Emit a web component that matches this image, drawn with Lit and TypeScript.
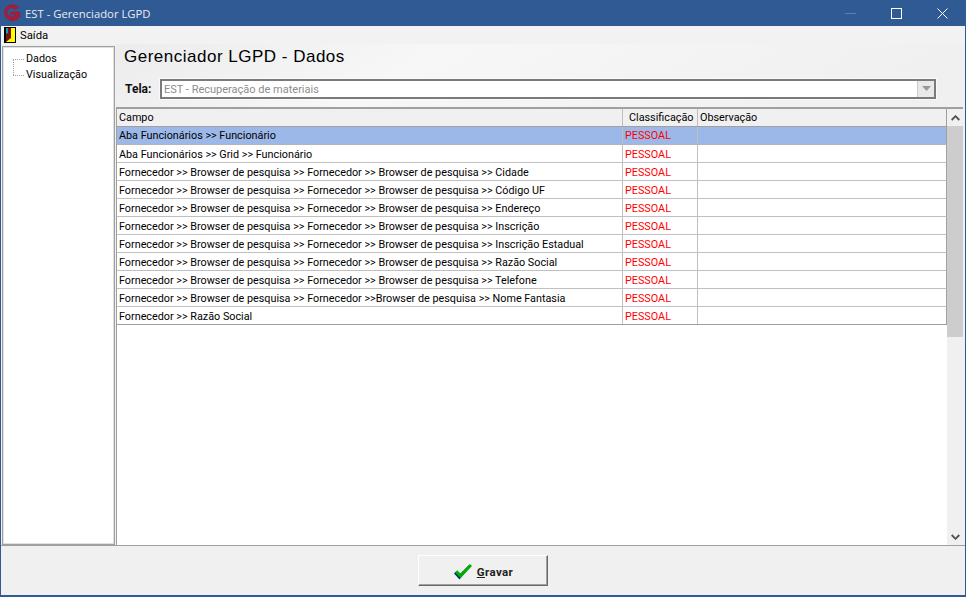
import { LitElement, html, css, svg } from "lit";
import { customElement } from "lit/decorators.js";

const B = "Browser de pesquisa";
const F = "Fornecedor";
const rows = [
  "Aba Funcionários >> Funcionário",
  "Aba Funcionários >> Grid >> Funcionário",
  `${F} >> ${B} >> ${F} >> ${B} >> Cidade`,
  `${F} >> ${B} >> ${F} >> ${B} >> Código UF`,
  `${F} >> ${B} >> ${F} >> ${B} >> Endereço`,
  `${F} >> ${B} >> ${F} >> ${B} >> Inscrição`,
  `${F} >> ${B} >> ${F} >> ${B} >> Inscrição Estadual`,
  `${F} >> ${B} >> ${F} >> ${B} >> Razão Social`,
  `${F} >> ${B} >> ${F} >> ${B} >> Telefone`,
  `${F} >> ${B} >> ${F} >>${B} >> Nome Fantasia`,
  `${F} >> Razão Social`,
];

@customElement("app-root")
export class AppRoot extends LitElement {
  static styles = css`
    :host {
      display: block;
      width: 966px;
      height: 597px;
      font-family: Roboto, sans-serif;
      font-size: 10.8px;
      color: #000;
      overflow: hidden;
    }
    .window {
      width: 966px;
      height: 597px;
      box-sizing: border-box;
      display: flex;
      flex-direction: column;
      background: #f0f0f0;
      border: solid #2f5a93;
      border-width: 0 1px 2px 1px;
    }
    .titlebar {
      height: 26px;
      flex: none;
      background: #2f5a93;
      color: #fff;
      display: flex;
      align-items: center;
      padding-left: 2px;
      font-family: "Open Sans", sans-serif;
      font-size: 11.3px;
      gap: 4px;
    }
    .titlebar .t { flex: 1; color: #e8edf4; }
    .wbtns { display: flex; align-items: center; height: 26px; }
    .wbtn { width: 46px; height: 26px; display: flex; align-items: center; justify-content: center; }
    .menubar {
      height: 18px;
      flex: none;
      display: flex;
      align-items: center;
      padding-left: 3px;
      gap: 4px;
      background: #f2f2f2;
      font-size: 11.3px;
    }
    .body { flex: 1; display: flex; min-height: 0; padding-left: 1px; }
    .tree {
      width: 113px;
      flex: none;
      box-sizing: border-box;
      margin-top: 2px;
      background: #fff;
      border: 1px solid #a0a0a0;
      outline: 1px solid #e0e0e0;
      outline-offset: -2px;
      padding: 4px 0 0 10px;
      position: relative;
    }
    .node {
      height: 16px;
      display: flex;
      align-items: center;
      gap: 2px;
      line-height: 16px;
    }
    .dots { width: 11px; border-top: 1px dotted #a0a0a0; }
    .vline {
      position: absolute;
      left: 10px;
      top: 12px;
      height: 16px;
      border-left: 1px dotted #a0a0a0;
    }
    .right { flex: 1; min-width: 0; display: flex; flex-direction: column; margin-left: 1px; margin-right: 2px; }
    .head {
      height: 63px;
      flex: none;
      box-sizing: border-box;
      background: linear-gradient(150deg, #ececec 0%, #f7f7f7 35%, #f0f0f0 90%);
      padding: 0 0 0 8px;
    }
    h1 {
      margin: 0;
      padding-top: 1px;
      font-weight: 400;
      font-size: 17px;
      height: 34px;
      line-height: 24px;
      font-family: "Liberation Sans", sans-serif;
      letter-spacing: 0.5px;
    }
    .tela { display: flex; align-items: center; gap: 7px; }
    .tela b { width: 29px; color: #111; font-size: 12px; padding-left: 1px; margin-right: -1px; }
    .combo {
      width: 776px;
      height: 20px;
      box-sizing: border-box;
      background: #fff;
      border: 2px solid #7a7a7a;
      outline: 1px solid #fafafa;
      display: flex;
      align-items: center;
      padding-left: 2px;
      color: #8c8c8c;
      font-size: 11px;
    }
    .combo span { flex: 1; }
    .cbtn {
      width: 16px;
      height: 16px;
      background: #e9e9e9;
      border-left: 1px solid #ccc;
      display: flex;
      align-items: center;
      justify-content: center;
    }
    .gridwrap {
      flex: 1;
      min-height: 0;
      display: flex;
      background: #fff;
      border-top: 2px solid #a0a0a0;
      border-left: 1px solid #a0a0a0;
    }
    .grid { flex: 1; min-width: 0; }
    .row {
      display: grid;
      grid-template-columns: 506px 75px 249px;
      height: 18px;
      box-sizing: border-box;
      border-bottom: 1px solid #c0c0c0;
      border-right: 1px solid #a0a0a0;
      line-height: 19px;
    }
    .row > div {
      padding-left: 2px;
      border-right: 1px solid #c0c0c0;
      white-space: nowrap;
      overflow: hidden;
    }
    .row > div:last-child { border-right: none; }
    .row.hdr { background: #f0f0f0; border-bottom-color: #a0a0a0; height: 18px; line-height: 18px; }
    .row.hdr > div:nth-child(2) { padding-left: 6px; }
    .row.sel { background: #9cb8e8; border-bottom-color: #b4b4b4; line-height: 18px; }
    .row.last { border-bottom-color: #a0a0a0; }
    .red { color: #f00; }
    .sb {
      width: 16px;
      flex: none;
      background: #f0f0f0;
      display: flex;
      flex-direction: column;
    }
    .arrow { height: 17px; display: flex; align-items: center; justify-content: center; flex: none; }
    .thumb { height: 211px; flex: none; background: #cdcdcd; }
    .grow { flex: 1; }
    .footer {
      height: 50px;
      flex: none;
      border-top: 1px solid #a0a0a0;
      display: flex;
      align-items: center;
      justify-content: center;
      background: #f0f0f0;
      box-sizing: border-box;
    }
    .btn {
      width: 130px;
      height: 31px;
      box-sizing: border-box;
      background: #f0f0f0;
      border: 1px solid;
      border-color: #fff #696969 #696969 #fff;
      box-shadow: inset -1px -1px 0 #a0a0a0;
      font-weight: 700;
      font-size: 11.5px;
      display: flex;
      align-items: center;
      justify-content: center;
      gap: 4px;
      padding: 2px 0 0;
      font-family: inherit;
      color: #222;
      letter-spacing: 0.4px;
    }
    .btn span { margin-top: 1px; }
    .btn u { text-decoration: underline; }
  `;

  private logo() {
    return svg`<svg width="18" height="18" viewBox="0 0 18 18">
      <path d="M16 3.6 A8.2 8.2 0 1 0 16.8 12.5 L17 8 L8 8 L6.6 10.6 L12.6 10.6 A4.5 4.5 0 1 1 12 5.4 Z" fill="#a81b3a" stroke="#8a2242" stroke-width=".5"/>
    </svg>`;
  }

  render() {
    return html`<div class="window">
      <div class="titlebar">
        ${this.logo()}
        <span class="t">EST - Gerenciador LGPD</span>
        <div class="wbtns">
          <div class="wbtn">
            <svg width="11" height="11" viewBox="0 0 11 11"><path d="M0 5.5H11" stroke="#5f80ad" stroke-width="1"/></svg>
          </div>
          <div class="wbtn">
            <svg width="11" height="11" viewBox="0 0 11 11"><rect x=".5" y=".5" width="10" height="10" fill="none" stroke="#fff"/></svg>
          </div>
          <div class="wbtn">
            <svg width="11" height="11" viewBox="0 0 11 11"><path d="M.5.5L10.5 10.5M10.5.5L.5 10.5" stroke="#fff" stroke-width="1"/></svg>
          </div>
        </div>
      </div>
      <div class="menubar">
        <svg width="12" height="16" viewBox="0 0 12 16">
          <rect x="0" y="0" width="12" height="16" fill="#000"/>
          <rect x="2" y="1" width="9" height="14" fill="#ffff00"/>
          <path d="M2 1L7 1L7 11L2 15Z" fill="#7a1010"/>
          <path d="M2 1L4 1L4 6L2 7Z" fill="#12a0a8"/>
        </svg>
        <span>Saída</span>
      </div>
      <div class="body">
        <div class="tree">
          <span class="vline"></span>
          <div class="node"><span class="dots"></span><span>Dados</span></div>
          <div class="node"><span class="dots"></span><span>Visualização</span></div>
        </div>
        <div class="right">
          <div class="head">
            <h1>Gerenciador LGPD - Dados</h1>
            <div class="tela">
              <b>Tela:</b>
              <div class="combo">
                <span>EST - Recuperação de materiais</span>
                <div class="cbtn">
                  <svg width="9" height="6" viewBox="0 0 9 6"><path d="M0 0H9L4.5 5Z" fill="#999"/></svg>
                </div>
              </div>
            </div>
          </div>
          <div class="gridwrap">
            <div class="grid">
              <div class="row hdr"><div>Campo</div><div>Classificação</div><div>Observação</div></div>
              ${rows.map(
                (r, i) => html`<div class="row ${i === 0 ? "sel" : ""} ${i === rows.length - 1 ? "last" : ""}">
                  <div>${r}</div><div class="red">PESSOAL</div><div></div>
                </div>`
              )}
            </div>
            <div class="sb">
              <div class="arrow"><svg width="9" height="6" viewBox="0 0 9 6"><path d="M.7 5L4.5 1.2L8.3 5" fill="none" stroke="#505050" stroke-width="1.8"/></svg></div>
              <div class="thumb"></div>
              <div class="grow"></div>
              <div class="arrow"><svg width="9" height="6" viewBox="0 0 9 6"><path d="M.7 1L4.5 4.8L8.3 1" fill="none" stroke="#505050" stroke-width="1.8"/></svg></div>
            </div>
          </div>
        </div>
      </div>
      <div class="footer">
        <button class="btn">
          <svg width="20" height="17" viewBox="0 0 20 17">
            <path d="M2 10L4 8L7 11.5L17 1.5L18.5 3L7.5 16Z" fill="#003080" transform="translate(-1 0.6)"/>
            <path d="M2 9.5L4.2 7.3L7.4 10.5L17 1L19 3L7.6 15Z" fill="#00b000"/>
          </svg>
          <span><u>G</u>ravar</span>
        </button>
      </div>
    </div>`;
  }
}
